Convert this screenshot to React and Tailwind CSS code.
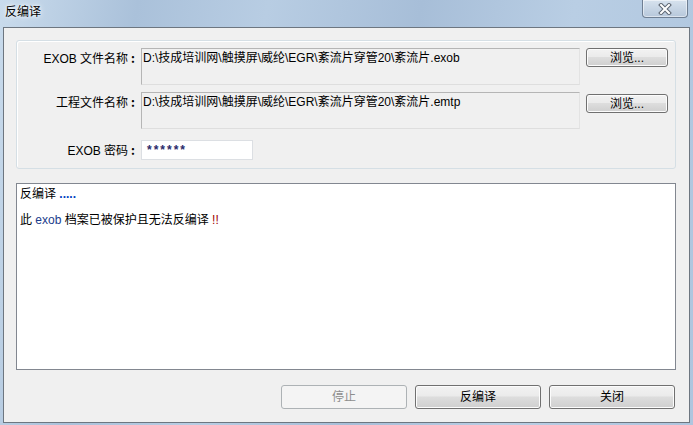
import React from 'react';

const font = "font-['Tahoma','Liberation_Sans','Noto_Sans_CJK_SC',sans-serif]";

function WinButton({ children, disabled, className = '' }) {
  return (
    <div
      className={`flex items-center justify-center rounded-[3px] border text-[12px] leading-none ${
        disabled
          ? 'border-[#adb2b5] bg-[#f4f4f4] text-[#8d8d8d]'
          : 'border-[#707070] bg-[linear-gradient(#f2f2f2_0%,#ebebeb_45%,#dddddd_50%,#cfcfcf_100%)] text-black shadow-[inset_0_0_0_1px_#fcfcfc]'
      } ${className}`}
    >
      {children}
    </div>
  );
}

function Field({ children, className = '' }) {
  return (
    <div
      className={`border border-t-[#b5b5b5] border-l-[#b5b5b5] border-r-[#e3e3e3] border-b-[#dedede] px-[1px] pt-[2px] text-[12px] leading-[14px] text-black ${className}`}
    >
      {children}
    </div>
  );
}

function Label({ children, className = '' }) {
  return (
    <div className={`w-[121px] text-right text-[12px] leading-[14px] text-black ${className}`}>
      {children}
      <span className="ml-[3px] font-['Noto_Sans_CJK_JP',sans-serif] font-bold">:</span>
      <span className="inline-block w-[3px]" />
    </div>
  );
}

export default function App() {
  return (
    <div
      className={`${font} flex h-[425px] w-[693px] flex-col bg-[linear-gradient(100deg,#c9dbec_0%,#aac1da_18%,#b8cde3_35%,#a7bed8_55%,#b9cee4_75%,#aec5de_100%)]`}
    >
      {/* title bar */}
      <div className="relative h-[27px] shrink-0">
        <span className="absolute left-[5px] top-[5px] text-[12px] leading-[14px] text-black [text-shadow:0_0_6px_#ffffff,0_0_3px_#ffffff]">
          反编译
        </span>
        <div className="absolute right-[5px] top-0 flex h-[18px] w-[46px] items-center justify-center rounded-b-[4px] border border-t-0 border-[#6f7f93] bg-[linear-gradient(#d7e2ee,#b7c8db)] shadow-[inset_0_0_0_1px_rgba(255,255,255,0.5)]">
          <svg width="14" height="12" viewBox="0 0 14 12">
            <path d="M3 2 L11 10 M11 2 L3 10" stroke="#5b6470" strokeWidth="4" strokeLinecap="square" />
            <path d="M3 2 L11 10 M11 2 L3 10" stroke="#ffffff" strokeWidth="2" strokeLinecap="square" />
          </svg>
        </div>
      </div>

      {/* client area */}
      <div className="mx-[3px] mb-[4px] flex flex-1 flex-col border border-[#6d7680] bg-[#f0f0f0] px-[12px] pt-[12px] pb-[13px]">
        {/* group box */}
        <div className="mr-[1px] flex h-[129px] flex-col rounded-[3px] border border-[#d5dfe5] pt-[7px] shadow-[inset_1px_1px_0_#ffffff]">
          <div className="flex h-[37px] items-start">
            <Label className="pt-[3px]">EXOB 文件名称</Label>
            <Field className="ml-[3px] h-[37px] w-[439px]">D:\技成培训网\触摸屏\威纶\EGR\紊流片穿管20\紊流片.exob</Field>
            <WinButton className="ml-[6px] h-[19px] w-[82px]">浏览...</WinButton>
          </div>
          <div className="mt-[7px] flex h-[37px] items-start">
            <Label className="pt-[3px]">工程文件名称</Label>
            <Field className="ml-[3px] h-[37px] w-[439px]">D:\技成培训网\触摸屏\威纶\EGR\紊流片穿管20\紊流片.emtp</Field>
            <WinButton className="ml-[6px] mt-[2px] h-[19px] w-[82px]">浏览...</WinButton>
          </div>
          <div className="mt-[11px] flex h-[20px] items-center">
            <Label>EXOB 密码</Label>
            <div className="ml-[3px] h-[20px] w-[112px] border border-[#dcdfe3] bg-white pl-[5px] pt-[2px] text-[12px] font-bold leading-[14px] tracking-[2px] text-[#2a2a6a]">
              ******
            </div>
          </div>
        </div>

        {/* output box */}
        <div className="mt-[14px] mr-[1px] h-[187px] border border-[#828790] bg-white px-[3px] pt-[3px] text-[12px] leading-[14px] text-black">
          <div>
            反编译 <span className="font-bold text-[#0040c0]">.....</span>
          </div>
          <div className="mt-[12px]">
            此 <span className="text-[#1a3c8c]">exob</span> 档案已被保护且无法反编译 <span className="text-[#a00000]">!!</span>
          </div>
        </div>

        {/* bottom buttons */}
        <div className="mt-[15px] mr-[1px] flex justify-end gap-[8px] pr-[1px]">
          <WinButton disabled className="h-[24px] w-[126px]">停止</WinButton>
          <WinButton className="h-[24px] w-[126px]">反编译</WinButton>
          <WinButton className="h-[24px] w-[126px]">关闭</WinButton>
        </div>
      </div>
    </div>
  );
}
